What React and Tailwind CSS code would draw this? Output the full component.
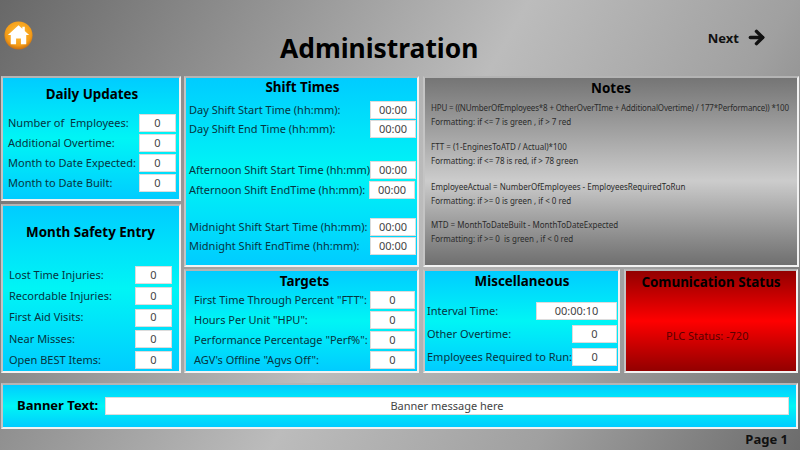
import { ArrowRight } from 'lucide-react'

const panel = 'border-2 border-t-[#b4b4b4] border-l-[#c4c4c4] border-r-[#f2f2f2] border-b-[#f2f2f2]'
const cyan = 'bg-gradient-to-b from-[#00ccff] via-[#00f5f5] to-[#00ccff]'
const heading = 'text-[13.4px] leading-[18px] font-bold text-black text-center'

function Box({ value, className }) {
	return (
		<div className={`h-[18px] bg-white border border-[#dcdcdc] flex items-center justify-center text-[11px] text-[#444] ${className}`}>
			{value}
		</div>
	)
}

function Row({ label, value = '0', box = 'w-[37px]', className = '' }) {
	return (
		<div className={`flex items-center justify-between text-[11px] text-[#06343f] ${className}`}>
			<span className="whitespace-pre">{label}</span>
			<Box value={value} className={box} />
		</div>
	)
}

function HomeIcon() {
	return (
		<svg width="29" height="29" viewBox="0 0 30 30">
			<defs>
				<radialGradient id="homeBg" cx="50%" cy="40%" r="60%">
					<stop offset="0%" stopColor="#ffc23d" />
					<stop offset="75%" stopColor="#f59c16" />
					<stop offset="100%" stopColor="#c96f10" />
				</radialGradient>
			</defs>
			<circle cx="15" cy="15" r="14.5" fill="url(#homeBg)" />
			<path d="M15 4.5 L19 8.1 V6 H21.5 V10.4 L26 14.5 H23 V24 H17.5 V18 H12.5 V24 H7 V14.5 H4 Z" fill="#fff" />
		</svg>
	)
}

const notes = [
	['HPU = ((NUmberOfEmployees*8 + OtherOverTIme + AdditionalOvertime) / 177*Performance)) *100', 'Formatting: if <= 7 is green , if > 7 red', 'mb-[11px]', 'tracking-[-0.16px]'],
	['FTT = (1-EnginesToATD / Actual)*100', 'Formatting: if <= 78 is red, if > 78 green', 'mb-[12px]', ''],
	['EmployeeActual = NumberOfEmployees - EmployeesRequiredToRun', 'Formatting: if >= 0 is green , if < 0 red', 'mb-[10px]', ''],
	['MTD = MonthToDateBuilt - MonthToDateExpected', 'Formatting: if >= 0  is green , if < 0 red', '', ''],
]

export default function App() {
	return (
		<div className="w-[800px] h-[450px] overflow-hidden font-['Noto_Sans',sans-serif] bg-[linear-gradient(120deg,#686868_0%,#bcbcbc_50%,#a0a0a0_75%,#6c6c6c_100%)]">
			<header className="h-[76px] flex items-start pl-[4px]">
				<div className="mt-[21px]"><HomeIcon /></div>
				<h1 className="ml-[247px] mt-[28px] text-[26.4px] leading-[40px] font-bold text-black">Administration</h1>
				<div className="ml-auto mr-[33px] mt-[27px] flex items-center gap-[7px] text-[13px] leading-[20px] font-bold text-[#111]">
					Next <ArrowRight size={21} strokeWidth={4} />
				</div>
			</header>

			<main className="flex pl-[1px] gap-[3px] h-[297px]">
				<div className="w-[180px] flex flex-col gap-[3px]">
					<section className={`${panel} ${cyan} h-[125px] pl-[5px] pr-[3px] pt-[7px]`}>
						<h2 className={`${heading} mb-[11px]`}>Daily Updates</h2>
						<div className="flex flex-col gap-[2px]">
							<Row label="Number of  Employees:" />
							<Row label="Additional Overtime:" />
							<Row label="Month to Date Expected:" />
							<Row label="Month to Date Built:" />
						</div>
					</section>
					<section className={`${panel} ${cyan} h-[169px] pl-[6px] pr-[7px] pt-[17px]`}>
						<h2 className={`${heading} mb-[25px]`}>Month Safety Entry</h2>
						<div className="flex flex-col gap-[3.3px]">
							<Row label="Lost Time Injuries:" />
							<Row label="Recordable Injuries:" />
							<Row label="First Aid Visits:" />
							<Row label="Near Misses:" />
							<Row label="Open BEST Items:" />
						</div>
					</section>
				</div>

				<div className="w-[235px] flex flex-col gap-[2px]">
					<section className={`${panel} ${cyan} h-[191px] pl-[3px] pr-[1px]`}>
						<h2 className={`${heading} mb-[5px]`}>Shift Times</h2>
						<Row label="Day Shift Start Time (hh:mm):" value="00:00" box="w-[46px]" className="mb-[1px]" />
						<Row label="Day Shift End Time (hh:mm):" value="00:00" box="w-[46px]" className="mb-[23px]" />
						<Row label="Afternoon Shift Start Time (hh:mm)" value="00:00" box="w-[46px]" className="mb-[2px]" />
						<Row label="Afternoon Shift EndTime (hh:mm):" value="00:00" box="w-[46px] mr-[1px]" className="mb-[19px]" />
						<Row label="Midnight Shift Start Time (hh:mm):" value="00:00" box="w-[46px]" className="mb-[1px]" />
						<Row label="Midnight Shift EndTime (hh:mm):" value="00:00" box="w-[46px]" />
					</section>
					<section className={`${panel} ${cyan} h-[104px] pl-[8px] pr-[2px] pt-[1px]`}>
						<h2 className={`${heading} mb-[1px]`}>Targets</h2>
						<div className="flex flex-col gap-[2px]">
							<Row label='First Time Through Percent "FTT":' box="w-[45px]" />
							<Row label='Hours Per Unit "HPU":' box="w-[45px]" />
							<Row label='Performance Percentage "Perf%":' box="w-[45px]" />
							<Row label={`AGV's Offline "Agvs Off":`} box="w-[45px]" />
						</div>
					</section>
				</div>

				<div className="w-[376px] ml-[1px] flex flex-col gap-[2px]">
					<section className={`${panel} h-[191px] bg-gradient-to-b from-[#757575] via-[#cccccc] via-55% to-[#6f6f6f] px-[6px] text-[8px] leading-[14px] text-[#2b2b2b]`}>
						<h2 className={`${heading} mb-[4px] pt-[1px]`}>Notes</h2>
						{notes.map(([a, b, m, t]) => (
							<div key={a} className={m}>
								<p className={`whitespace-pre ${t}`}>{a}</p>
								<p className="whitespace-pre">{b}</p>
							</div>
						))}
					</section>
					<div className="flex gap-[4px] h-[104px]">
						<section className={`${panel} ${cyan} w-[197px] pl-[2px] pr-[1px] pt-[1px]`}>
							<h2 className={`${heading} mb-[12px]`}>Miscellaneous</h2>
							<div className="flex flex-col gap-[5px]">
								<Row label="Interval Time:" value="00:00:10" box="w-[81px]" />
								<Row label="Other Overtime:" box="w-[45px]" />
								<Row label="Employees Required to Run:" box="w-[45px]" />
							</div>
						</section>
						<section className={`${panel} w-[174px] bg-gradient-to-b from-[#930000] via-[#ff0000] to-[#930000] pt-[2px]`}>
							<h2 className={heading}>Comunication Status</h2>
							<p className="mt-[37px] pl-[40px] text-[11px] leading-[16px] text-[#5a0000]">PLC Status: -720</p>
						</section>
					</div>
				</div>
			</main>

			<section className={`${panel} ${cyan} ml-[1px] mt-[10px] w-[797px] h-[46px] flex items-center pl-[14px] pr-[7px]`}>
				<span className="w-[88px] text-[13px] font-bold text-black whitespace-nowrap">Banner Text:</span>
				<Box value="Banner message here" className="flex-1 text-[#333]" />
			</section>
			<div className="mr-[12px] text-right text-[13px] leading-[20px] font-bold text-[#111]">Page 1</div>
		</div>
	)
}
